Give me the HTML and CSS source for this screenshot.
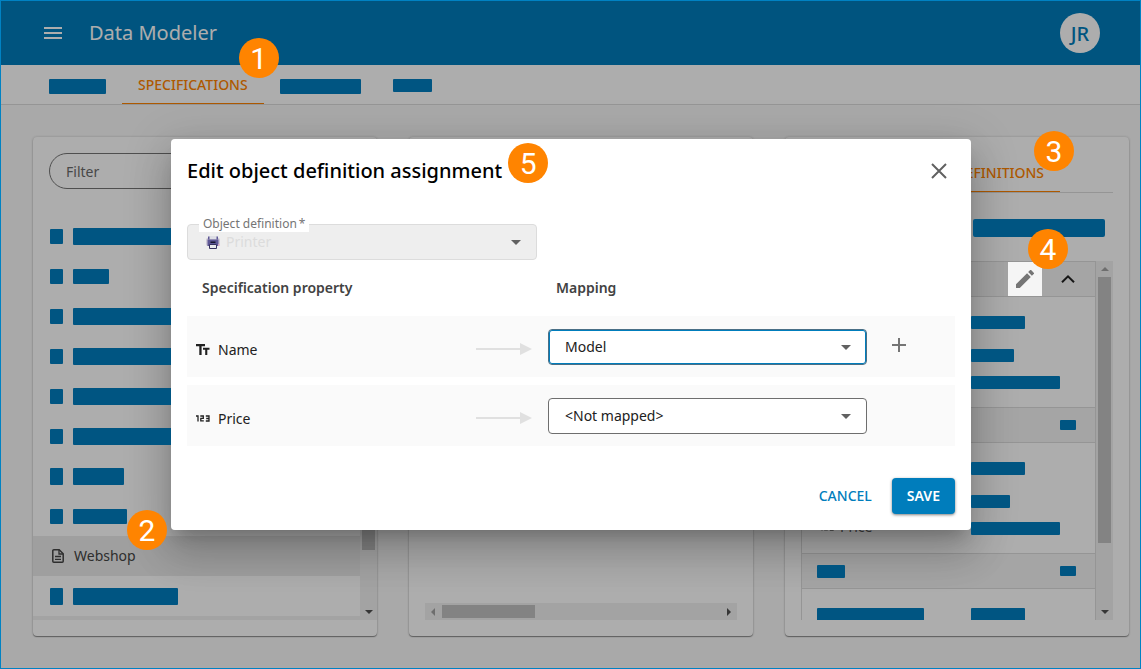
FILE: index.html
```html
<!DOCTYPE html>
<html lang="en">
<head>
<meta charset="utf-8">
<meta name="viewport" content="width=device-width, initial-scale=1">
<title>Data Modeler</title>
<link rel="stylesheet" href="styles.css">
</head>
<body>
<div class="app">
  <header class="app-bar">
    <button class="icon-button menu-button" type="button" aria-label="Menu">
      <svg width="18" height="12" viewBox="0 0 18 12"><path d="M0 0h18v2H0zM0 5h18v2H0zM0 10h18v2H0z" fill="currentColor"/></svg>
    </button>
    <h1 class="app-title">Data Modeler</h1>
    <span class="avatar">JR</span>
  </header>

  <nav class="tabs">
    <a class="tab" href="#"><span class="bar bar-w57 bar-h15"></span></a>
    <a class="tab tab-active" href="#">SPECIFICATIONS<span class="badge badge-tab">1</span></a>
    <a class="tab" href="#"><span class="bar bar-w81 bar-h15"></span></a>
    <a class="tab" href="#"><span class="bar bar-w39"></span></a>
  </nav>

  <main class="columns">
    <section class="card">
      <input class="filter" type="text" placeholder="Filter" aria-label="Filter">
      <div class="list-area">
        <ul class="list">
          <li class="item"><span class="bar bar-icon"></span><span class="bar bar-wide"></span></li>
          <li class="item"><span class="bar bar-icon"></span><span class="bar bar-w36 bar-h15"></span></li>
          <li class="item"><span class="bar bar-icon"></span><span class="bar bar-wide"></span></li>
          <li class="item"><span class="bar bar-icon"></span><span class="bar bar-wide"></span></li>
          <li class="item"><span class="bar bar-icon"></span><span class="bar bar-wide"></span></li>
          <li class="item"><span class="bar bar-icon"></span><span class="bar bar-wide"></span></li>
          <li class="item"><span class="bar bar-icon bar-h17"></span><span class="bar bar-w51 bar-h17"></span></li>
          <li class="item"><span class="bar bar-icon"></span><span class="bar bar-w54 bar-h15"></span></li>
          <li class="item item-selected">
            <svg class="doc-icon" width="12" height="14" viewBox="0 0 12 14" fill="none" stroke="currentColor" stroke-width="1.5"><path d="M1.8.8h5.4l4 4v7.4a1 1 0 0 1-1 1H1.800a1 1 0 0 1-1-1V1.800a1 1 0 0 1 1-1z"/><path d="M7 1v4h4M3 7.500h6M3 10.300h6" stroke-width="1.300"/></svg>
            <span>Webshop</span>
            <span class="badge badge-item">2</span>
          </li>
          <li class="item"><span class="bar bar-icon bar-h17"></span><span class="bar bar-w105 bar-h17"></span></li>
        </ul>
        <div class="vscroll">
          <span class="arrow arrow-up"></span>
          <span class="thumb thumb-list"></span>
          <span class="arrow arrow-down"></span>
        </div>
      </div>
    </section>

    <section class="card card-end">
      <div class="hscroll">
        <span class="arrow arrow-left"></span>
        <span class="thumb thumb-h"></span>
        <span class="arrow arrow-right"></span>
      </div>
    </section>

    <section class="card">
      <nav class="sub-tabs">
        <a class="sub-tab" href="#">OBJECT DEFINITIONS<span class="badge badge-sub">3</span></a>
      </nav>
      <span class="bar bar-action"></span>
      <div class="defs-area">
        <div class="defs">
          <div class="def-head">
            <button class="icon-button edit-button" type="button" aria-label="Edit">
              <svg width="18" height="18" viewBox="3 3 18 18"><path d="M3 17.250V21h3.750L17.810 9.940l-3.750-3.750zM20.710 7.040a1 1 0 0 0 0-1.410l-2.340-2.340a1 1 0 0 0-1.410 0l-1.830 1.830 3.750 3.750z" fill="currentColor"/></svg>
            </button>
            <button class="icon-button collapse-button" type="button" aria-label="Collapse">
              <svg width="14" height="8" viewBox="0 0 14 8" fill="none" stroke="currentColor" stroke-width="2"><path d="M1 7.200l6-5.800 6 5.800"/></svg>
            </button>
          </div>
          <div class="def-body">
            <div class="def-row def-row-title"><span></span><span class="bar bar-w54"></span></div>
            <div class="def-row"><span></span><span class="bar bar-w43"></span></div>
            <div class="def-row"><span></span><span class="bar bar-w89"></span></div>
          </div>
          <div class="def-head"><span class="bar bar-chip"></span></div>
          <div class="def-body">
            <div class="def-row def-row-title"><span></span><span class="bar bar-w54"></span></div>
            <div class="def-row"><span></span><span class="bar bar-w39"></span></div>
            <div class="def-row"><span class="def-name">
              <svg width="14" height="7" viewBox="0 0 14 7" fill="none" stroke="currentColor" stroke-width="1.300"><path d="M0 1h2v5.500M4.300 1h3v2.300h-2.500v2.500h3M9.800 1h3.200v5h-3.200M10.200 3.500h2.800"/></svg>
              Price</span><span class="bar bar-w89"></span></div>
          </div>
          <div class="def-head"><span class="bar bar-w28"></span><span class="bar bar-chip"></span></div>
          <div class="def-body">
            <div class="def-row"><span class="bar bar-w107"></span><span class="bar bar-w54"></span></div>
          </div>
        </div>
        <div class="vscroll">
          <span class="arrow arrow-up arrow-off"></span>
          <span class="thumb thumb-defs"></span>
          <span class="arrow arrow-down"></span>
        </div>
        <span class="badge badge-edit">4</span>
      </div>
    </section>
  </main>

  <div class="scrim"></div>

  <div class="dialog-layer">
    <div class="dialog" role="dialog" aria-labelledby="dialog-title">
      <form class="dialog-body">
        <div class="dialog-head">
          <h2 class="dialog-title" id="dialog-title">Edit object definition assignment<span class="badge badge-title">5</span></h2>
          <button class="icon-button close-button" type="button" aria-label="Close">
            <svg width="16" height="16" viewBox="0 0 16 16" stroke="currentColor" stroke-width="2"><path d="M1 1l14 14M15 1L1 15"/></svg>
          </button>
        </div>

        <div class="field">
          <label class="field-label" for="definition">Object definition<span class="star">*</span></label>
          <select class="select select-disabled" id="definition" disabled><option>Printer</option></select>
          <svg class="printer" width="14" height="14" viewBox="0 0 14 14"><rect x="0" y="3" width="14" height="8" rx="2" fill="#cfc9d6"/><path d="M3 1h8v3H3z" fill="#dedee4"/><path d="M1.500 4.500h11v6.500h-11z" fill="#5d5795"/><path d="M2 1.500h1.500v3H2zM10.500 1.500H12v3h-1.500z" fill="#5d5795"/><path d="M4.500 6.500h5v1.500h-5z" fill="#16142c"/><path d="M3.500 9.500h7v4h-7z" fill="#e8e8ec" stroke="#35315e"/><circle cx="13" cy="10" r="1" fill="#e0b4cc"/></svg>
          <span class="caret"></span>
        </div>

        <table class="mapping">
          <colgroup><col class="col-name"><col class="col-link"><col class="col-target"><col></colgroup>
          <thead>
            <tr><th class="th-name" colspan="2">Specification property</th><th class="th-target" colspan="2">Mapping</th></tr>
          </thead>
          <tbody>
            <tr>
              <td><label class="prop" for="map-name">
                <svg width="14" height="11" viewBox="0 0 14 11" fill="currentColor"><path d="M0 0h9v2.200H5.600V11H3.300V2.200H0zM7 3.800h6.500v2h-2.200V11H9.200V5.800H7z"/></svg>
                Name</label></td>
              <td><svg class="link-arrow" width="56" height="12" viewBox="0 0 56 12"><path d="M0 5h44V0l12 6-12 6V7H0z" fill="#e0e0e0"/></svg></td>
              <td><div class="pick"><select class="select select-focus" id="map-name"><option>Model</option></select><span class="caret"></span></div></td>
              <td><button class="icon-button add-button" type="button" aria-label="Add">
                <svg width="14" height="14" viewBox="0 0 14 14"><path d="M6 0h2v6h6v2H8v6H6V8H0V6h6z" fill="currentColor"/></svg>
              </button></td>
            </tr>
            <tr>
              <td><label class="prop" for="map-price">
                <svg width="14" height="7" viewBox="0 0 14 7" fill="none" stroke="currentColor" stroke-width="1.300"><path d="M0 1h2v5.500M4.300 1h3v2.300h-2.500v2.500h3M9.800 1h3.200v5h-3.200M10.200 3.500h2.800"/></svg>
                Price</label></td>
              <td><svg class="link-arrow" width="56" height="12" viewBox="0 0 56 12"><path d="M0 5h44V0l12 6-12 6V7H0z" fill="#e0e0e0"/></svg></td>
              <td><div class="pick"><select class="select" id="map-price"><option>&lt;Not mapped&gt;</option></select><span class="caret"></span></div></td>
              <td></td>
            </tr>
          </tbody>
        </table>

        <div class="actions">
          <button class="button" type="button">CANCEL</button>
          <button class="button button-primary" type="button">SAVE</button>
        </div>
      </form>
    </div>
  </div>
</div>
</body>
</html>
```

FILE: styles.css
```css
* { box-sizing: border-box; }

body {
  margin: 0;
  font-family: "Noto Sans", "Open Sans", sans-serif;
  font-size: 14px;
  line-height: 20px;
  color: #212121;
}

.app {
  position: relative;
  display: flex;
  flex-direction: column;
  height: 100vh;
  min-height: 600px;
  border: 1px solid #0082c3;
  background: #fafafa;
  overflow: hidden;
}

h1, h2, ul { margin: 0; padding: 0; }
ul { list-style: none; }
a { color: inherit; text-decoration: none; }
svg { display: block; flex: none; }

.icon-button {
  display: flex;
  align-items: center;
  justify-content: center;
  padding: 0;
  border: 0;
  background: none;
  color: inherit;
}

/* App bar */
.app-bar {
  display: flex;
  align-items: center;
  flex: none;
  height: 64px;
  padding: 0 40px;
  background: #007dbc;
  color: #fff;
}
.menu-button { width: 24px; height: 24px; }
.app-title {
  flex: 1;
  margin-left: 24px;
  font-size: 20px;
  line-height: 28px;
  font-weight: 400;
}
.avatar {
  width: 40px;
  height: 40px;
  border-radius: 50%;
  background: #fff;
  color: #007dbc;
  font-size: 20px;
  line-height: 42px;
  font-weight: 500;
  text-align: center;
}

/* Tabs */
.tabs {
  display: flex;
  flex: none;
  height: 40px;
  padding-left: 32px;
  background: #fff;
  border-bottom: 1px solid #dcdcdc;
}
.tab {
  position: relative;
  display: flex;
  align-items: flex-start;
  padding: 14px 16px 0;
}
.tab-active {
  padding-top: 10px;
  border-bottom: 1px solid #ff8400;
  color: #ff8400;
  font-weight: 500;
}

/* Placeholder bars stay above the scrim */
.bar {
  position: relative;
  z-index: 2;
  display: block;
  flex: none;
  height: 13px;
  border-radius: 1px;
  background: #005582;
}
.bar-h15 { height: 15px; }
.bar-h17 { height: 17px; }
.bar-w28 { width: 28px; }
.bar-w36 { width: 36px; }
.bar-w39 { width: 39px; }
.bar-w43 { width: 43px; }
.bar-w51 { width: 51px; }
.bar-w54 { width: 54px; }
.bar-w57 { width: 57px; }
.bar-w81 { width: 81px; }
.bar-w89 { width: 89px; }
.bar-w105 { width: 105px; }
.bar-w107 { width: 107px; }
.bar-wide { width: 160px; height: 17px; }
.bar-icon { width: 13px; height: 15px; }
.bar-icon.bar-h17 { height: 17px; }
.bar-chip { width: 16px; height: 10px; margin-left: auto; }
.bar-action {
  align-self: flex-end;
  width: 132px;
  height: 18px;
  margin: 26px 24px 24px 0;
  border-radius: 2px;
}

/* Cards */
.columns {
  display: flex;
  flex: 1;
  gap: 32px;
  min-height: 0;
  padding: 32px 11px 32px 32px;
}
.card {
  display: flex;
  flex: 1;
  flex-direction: column;
  min-width: 0;
  padding: 16px 0;
  border-radius: 4px;
  background: #fff;
  box-shadow: 0 1px 1px rgba(0, 0, 0, .4), 0 0 3px rgba(0, 0, 0, .2);
}
.card-end { justify-content: flex-end; }

.filter {
  flex: none;
  height: 36px;
  margin: 0 16px 27px;
  padding: 0 16px;
  border: 1px solid #757575;
  border-radius: 18px;
  background: transparent;
  font: inherit;
}
.filter::placeholder { color: #6b6b6b; opacity: 1; }

.list-area {
  display: flex;
  flex: 1;
  min-height: 0;
}
.list {
  flex: 1;
  min-width: 0;
  border-bottom: 4px solid #f0f0f0;
}
.item {
  position: relative;
  display: flex;
  align-items: center;
  gap: 10px;
  height: 40px;
  padding-left: 17px;
}
.item-selected { padding-left: 19px; background: #ebebeb; color: #444; }

/* Scroll bars */
.vscroll, .hscroll {
  display: flex;
  align-items: center;
  flex: none;
  background: #f1f1f1;
}
.vscroll { flex-direction: column; width: 17px; padding: 6px 0; }
.hscroll { height: 17px; margin: 0 16px; padding: 0 6px; }
.thumb { background: #c1c1c1; }
.thumb-list { width: 13px; height: 324px; }
.thumb-defs { width: 13px; height: 266px; margin-top: 6px; }
.thumb-h { width: 93px; height: 13px; margin-left: 7px; }
.arrow { border: 4px solid transparent; }
.arrow-up { border-top: 0; border-bottom-color: #505050; }
.arrow-off { border-bottom-color: #a3a3a3; }
.arrow-down { margin-top: auto; border-bottom: 0; border-top-color: #505050; }
.arrow-left { border-left: 0; border-right-color: #a3a3a3; }
.arrow-right { margin-left: auto; border-right: 0; border-left-color: #505050; }

/* Object definitions */
.sub-tabs {
  display: flex;
  justify-content: flex-end;
  flex: none;
  height: 40px;
  margin: 0 16px;
  padding-right: 53px;
  border-bottom: 1px solid #dcdcdc;
}
.sub-tab {
  position: relative;
  padding: 10px 16px 0;
  border-bottom: 1px solid #ff8400;
  color: #ff8400;
  font-weight: 500;
}
.defs-area {
  position: relative;
  display: flex;
  flex: 1;
  min-height: 0;
  margin: 0 16px;
}
.defs {
  flex: 1;
  min-width: 0;
  border: 1px solid #dcdcdc;
  border-width: 0 1px;
  overflow: hidden;
}
.def-head {
  display: flex;
  align-items: center;
  height: 36px;
  padding: 0 19px 0 15px;
  border: 1px solid #dcdcdc;
  border-width: 1px 0;
  background: #f3f3f3;
}
.edit-button {
  position: relative;
  z-index: 2;
  width: 34px;
  height: 34px;
  margin-left: auto;
  background: #f5f5f5;
  color: #757575;
}
.collapse-button { width: 16px; height: 34px; margin-left: 18px; }
.def-body { height: 110px; padding: 19px 15px 0; }
.def-row {
  display: grid;
  grid-template-columns: 154px 1fr;
  height: 13px;
  margin-bottom: 14px;
  line-height: 12px;
}
.def-row-title { margin-bottom: 20px; }
.def-name {
  display: flex;
  align-items: center;
  gap: 6px;
  height: 10px;
  padding-left: 3px;
  color: #616161;
}

/* Dialog */
.scrim {
  position: absolute;
  inset: 0;
  z-index: 1;
  background: rgba(0, 0, 0, .32);
}
.dialog-layer {
  position: absolute;
  inset: 0;
  display: flex;
  align-items: center;
  justify-content: center;
  padding-left: 1px;
}
.dialog { position: relative; width: 800px; max-width: 100%; }
.dialog::before {
  content: "";
  position: absolute;
  inset: 0;
  z-index: 1;
  border-radius: 4px;
  box-shadow: 0 11px 15px -7px rgba(0, 0, 0, .2), 0 24px 38px 3px rgba(0, 0, 0, .14), 0 9px 46px 8px rgba(0, 0, 0, .12);
}
.dialog-body {
  position: relative;
  z-index: 3;
  padding: 16px;
  border-radius: 4px;
  background: #fff;
}
.dialog-head {
  display: flex;
  align-items: center;
  justify-content: space-between;
  height: 32px;
}
.dialog-title {
  position: relative;
  font-size: 20px;
  line-height: 32px;
  font-weight: 500;
  color: #000;
}
.close-button { width: 32px; height: 32px; color: #616161; }

.field { position: relative; width: 350px; margin-top: 37px; }
.field-label {
  position: absolute;
  left: 12px;
  top: -8px;
  padding: 0 4px;
  background: #fff;
  color: #757575;
  font-size: 12px;
  line-height: 16px;
}
.star { margin-left: 2px; }
.select {
  display: block;
  width: 100%;
  height: 36px;
  padding: 0 16px;
  border: 1px solid #6e6e6e;
  border-radius: 4px;
  background: #fff;
  color: #212121;
  font: inherit;
  appearance: none;
}
.select-focus { border-color: #4a6f86; box-shadow: inset 0 0 0 1px #007dbc; }
.select-disabled {
  padding-left: 38px;
  border-color: #dcdcdc;
  background: #eee;
  color: #dcdcdc;
  opacity: 1;
}
.printer { position: absolute; left: 19px; top: 11px; }
.caret {
  position: absolute;
  right: 16px;
  top: 16px;
  border: 5px solid transparent;
  border-bottom: 0;
  border-top-color: #616161;
  pointer-events: none;
}

.mapping {
  width: 100%;
  margin-top: 10px;
  border-spacing: 0 8px;
  table-layout: fixed;
}
.mapping th {
  padding: 0 0 10px;
  color: #424242;
  font-weight: 600;
  text-align: left;
}
.mapping .th-name { padding-left: 15px; }
.mapping .th-target { padding-left: 8px; }
.mapping td { height: 61px; padding: 0; background: #fafafa; }
.col-name { width: 289px; }
.col-link { width: 72px; }
.col-target { width: 319px; }
.prop {
  display: flex;
  align-items: center;
  gap: 8px;
  padding: 6px 0 0 9px;
}
.link-arrow { margin-top: 4px; }
.pick { position: relative; }
.add-button { width: 32px; height: 32px; margin: 0 0 4px 16px; color: #757575; }

.actions {
  display: flex;
  justify-content: flex-end;
  gap: 4px;
  margin-top: 24px;
}
.button {
  height: 36px;
  padding: 0 16px;
  border: 0;
  border-radius: 4px;
  background: none;
  color: #007dbc;
  font: inherit;
  font-weight: 500;
}
.button-primary {
  padding: 0 15px;
  background: #007dbc;
  color: #fff;
  font-weight: 600;
  box-shadow: 0 1px 3px rgba(0, 0, 0, .5);
}

/* Numbered callouts */
.badge {
  position: absolute;
  z-index: 4;
  width: 40px;
  height: 40px;
  border-radius: 50%;
  background: #ff8400;
  color: #fff;
  font-family: Roboto, "Liberation Sans", sans-serif;
  font-size: 30px;
  line-height: 42px;
  font-weight: 400;
  text-align: center;
}
.badge-tab { right: -15px; top: -27px; }
.badge-item { left: 94px; top: -26px; }
.badge-sub { right: -14px; top: -22px; }
.badge-edit { right: 45px; top: -32px; }
.badge-title { left: calc(100% + 6px); top: -12px; }
```
